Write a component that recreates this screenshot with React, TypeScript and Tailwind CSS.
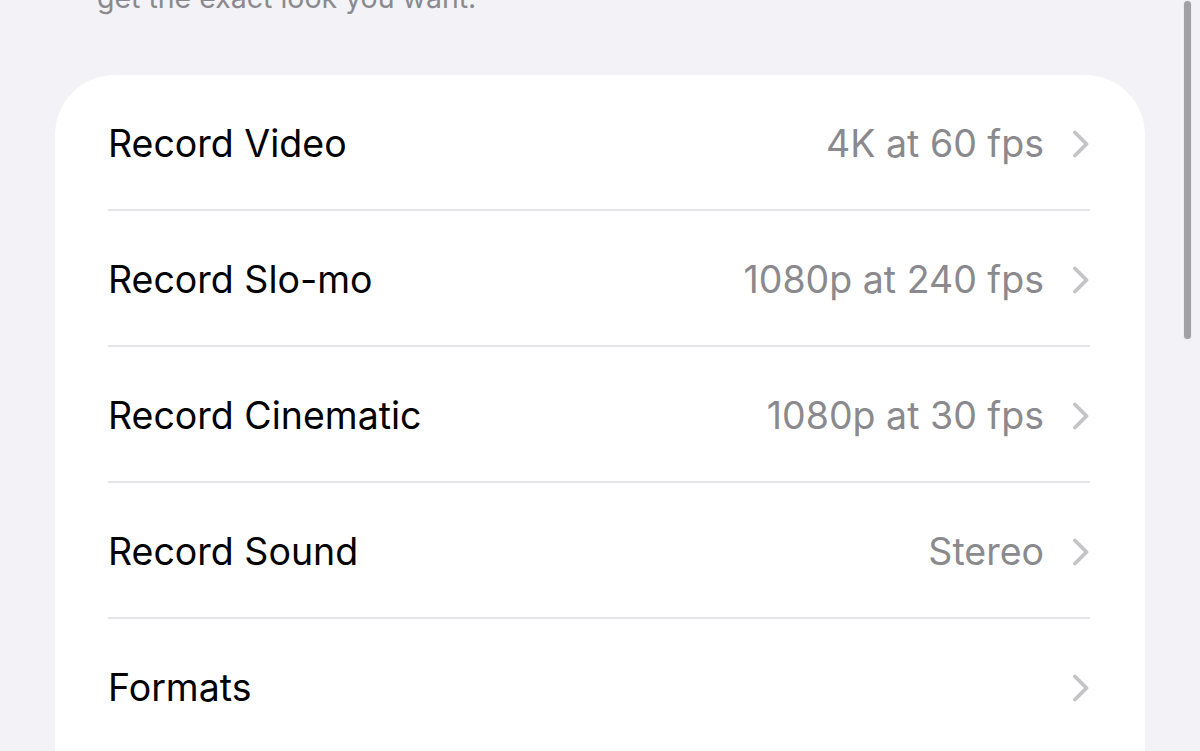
type Row = {
  label: string;
  value?: string;
};

const rows: Row[] = [
  { label: "Record Video", value: "4K at 60 fps" },
  { label: "Record Slo-mo", value: "1080p at 240 fps" },
  { label: "Record Cinematic", value: "1080p at 30 fps" },
  { label: "Record Sound", value: "Stereo" },
  { label: "Formats" },
];

function Chevron() {
  return (
    <svg width="18" height="28" viewBox="0 0 18 28" fill="none" className="shrink-0">
      <path
        d="M3 2.5 L14.5 14 L3 25.5"
        stroke="#c4c4c7"
        strokeWidth="3.8"
        strokeLinecap="round"
        strokeLinejoin="round"
      />
    </svg>
  );
}

function SettingsRow({ label, value }: Row) {
  return (
    <div className="flex h-[136px] items-center justify-between border-b-2 border-[#e4e4e8] pt-[4px]">
      <span className="text-[37.5px] text-black">{label}</span>
      <div className="flex items-center gap-[28px]">
        {value && <span className="text-[37.5px] text-[#8a8a8e]">{value}</span>}
        <Chevron />
      </div>
    </div>
  );
}

export default function App() {
  return (
    <div
      className="relative h-[751px] w-[1200px] overflow-hidden bg-[#f2f2f7]"
      style={{ fontFamily: "Inter, 'Liberation Sans', sans-serif" }}
    >
      {/* footer of the previous section, cut off at the top */}
      <div className="flex h-[75px] flex-col pl-[97px]">
        <p className="-mt-[20px] text-[28.5px] leading-[36px] text-[#8a8a8e]">
          get the exact look you want.
        </p>
      </div>

      <div className="mx-[55px] rounded-[60px] bg-white pb-[80px] pl-[53px] pr-[55px]">
        {rows.map((row) => (
          <SettingsRow key={row.label} {...row} />
        ))}
      </div>

      {/* scroll indicator */}
      <div className="absolute right-[8px] top-0 h-[340px] w-[9px] rounded-full border border-white/80 bg-[#a0a0a5]" />
    </div>
  );
}
